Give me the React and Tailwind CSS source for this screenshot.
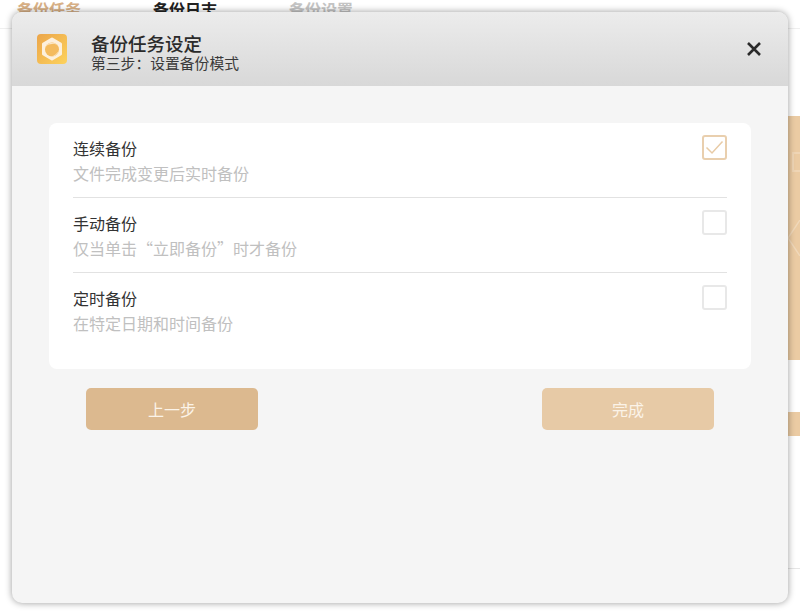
import React from "react";

const font = { fontFamily: '"Noto Sans CJK SC", "Liberation Sans", sans-serif' };

const rows = [
  { title: "连续备份", desc: "文件完成变更后实时备份", checked: true },
  { title: "手动备份", desc: "仅当单击“立即备份”时才备份", checked: false },
  { title: "定时备份", desc: "在特定日期和时间备份", checked: false },
];

function Logo() {
  return (
    <svg width="30" height="30" viewBox="0 0 30 30">
      <defs>
        <linearGradient id="lg" x1="0" y1="0" x2="1" y2="1">
          <stop offset="0" stopColor="#eba54a" />
          <stop offset="1" stopColor="#fdd25c" />
        </linearGradient>
      </defs>
      <rect width="30" height="30" rx="4" fill="url(#lg)" />
      <path d="M15 5 23.500 10v10L15 25 6.500 20V10Z" fill="#fdf0dc" stroke="#fdf0dc" strokeWidth="3" strokeLinejoin="round" />
      <circle cx="15" cy="15.500" r="7" fill="#f4bb5e" />
      <path d="M8 14a7.500 7.500 0 0 1 13-2.500 8 8 0 0 0-7.500-1.200A7 7 0 0 0 8 14Z" fill="#fbe6c6" />
      <path d="M21.800 16a7 7 0 0 1-8 6.300 7.500 7.500 0 0 0 5-2 7 7 0 0 0 3-4.300Z" fill="#fbe6c6" />
    </svg>
  );
}

function Row({ title, desc, checked, last }) {
  return (
    <div className={`flex justify-between h-[75px] pt-[13px] ${last ? "" : "border-b border-[#e2e2e2]"}`}>
      <div>
        <div className="text-base leading-[25px] text-[#333333]">{title}</div>
        <div className="text-base leading-[25px] text-[#c0c0c0]">{desc}</div>
      </div>
      <div className={`w-[25px] h-[25px] mt-[-1px] rounded-[3px] border-2 flex items-center justify-center ${checked ? "border-[#e9cfae]" : "border-[#e8e8e8]"}`}>
        {checked && (
          <svg width="19" height="15" viewBox="0 0 19 15" fill="none">
            <path d="M1.500 7.500 7 13 17.500 1.500" stroke="#e8cba6" strokeWidth="1.500" />
          </svg>
        )}
      </div>
    </div>
  );
}

export default function App() {
  return (
    <div className="relative w-[800px] h-[615px] overflow-hidden bg-white" style={font}>
      <div className="h-[29px] border-b border-[#efefef] overflow-hidden flex pl-[17px] gap-[72px] text-base font-bold leading-[18px]">
        <span className="text-[#d8b086]">备份任务</span>
        <span className="text-[#222222]">备份日志</span>
        <span className="text-[#c4c4c4]">备份设置</span>
      </div>
      <div className="ml-[400px] mt-[87px] h-[244px] bg-[#ebcba3] overflow-hidden flex flex-col items-end">
        <div className="mt-[36px] mr-[-8px] w-[16px] h-[20px] border-2 border-white/20" />
        <svg className="mt-[48px]" width="12" height="36" viewBox="0 0 12 36" fill="none">
          <path d="M12 0 0 18 12 36" stroke="#ffffff" strokeOpacity="0.25" strokeWidth="1.500" />
        </svg>
      </div>
      <div className="ml-[400px] mt-[52px] h-[24px] bg-[#ebcba3]" />
      <div className="ml-[400px] mt-[132px] border-b border-[#e6e6e6]" />

      <div className="absolute left-[12px] top-[12px] w-[776px] h-[591px] rounded-[10px] overflow-hidden bg-[#f5f5f5] shadow-[0_0_7px_rgba(0,0,0,0.4)] flex flex-col">
        <div className="h-[74px] shrink-0 bg-gradient-to-b from-[#ececec] to-[#d8d8d8] flex items-center pl-[25px] pr-[26px]">
          <Logo />
          <div className="ml-[24px] mt-[8px]">
            <div className="text-[18.500px] font-medium leading-[20px] text-[#2b2b2b]">备份任务设定</div>
            <div className="text-[14.800px] leading-[20px] text-[#3a3a3a]">第三步：设置备份模式</div>
          </div>
          <svg className="ml-auto" width="16" height="16" viewBox="0 0 16 16" fill="none">
            <path d="M2 2 14 14M14 2 2 14" stroke="#2a2a2a" strokeWidth="2.600" />
          </svg>
        </div>
        <div className="mt-[37px] mx-[37px] h-[246px] bg-white rounded-[8px] px-[24px]">
          {rows.map((r, i) => (
            <Row key={r.title} {...r} last={i === 2} />
          ))}
        </div>
        <div className="mt-[19px] mx-[74px] flex justify-between">
          <button className="w-[172px] h-[42px] rounded-[5px] bg-[#dcb98f] text-[#fbf3e8] text-base">上一步</button>
          <button className="w-[172px] h-[42px] rounded-[5px] bg-[#e7caa6] text-[#fbf3e8] text-base">完成</button>
        </div>
      </div>
    </div>
  );
}
